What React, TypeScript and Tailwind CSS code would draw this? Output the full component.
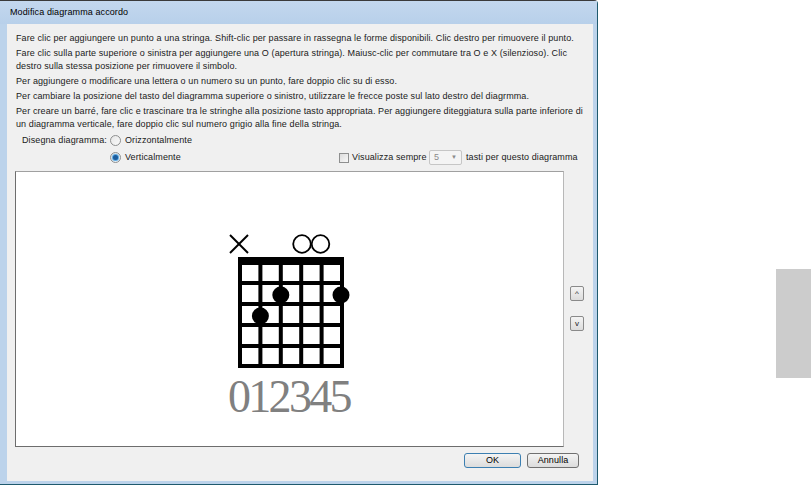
import React from "react";

const font = { fontFamily: '"Liberation Sans", Arial, sans-serif' };

function Radio({ checked }: { checked?: boolean }) {
  return (
    <span className="relative inline-flex h-[11px] w-[11px] items-center justify-center rounded-full border border-[#8e8f8f] bg-gradient-to-br from-[#e6e6e6] to-[#fafafa]">
      {checked && <span className="h-[5px] w-[5px] rounded-full bg-[#1c5c9c] shadow-[0_0_1px_1px_#4aa0e0]" />}
    </span>
  );
}

function Btn({ children, w, def }: { children: React.ReactNode; w: string; def?: boolean }) {
  return (
    <div
      className={`flex h-[15px] ${w} items-center justify-center rounded-[3px] border ${def ? "border-[#3c7fb1]" : "border-[#707070]"} bg-gradient-to-b from-[#f4f4f4] to-[#dcdcdc] text-[9px] text-black`}
    >
      {children}
    </div>
  );
}

function Chord() {
  const strings = [225, 245.4, 265.8, 286.2, 306.6, 327];
  const frets = [112, 133, 154, 175, 195];
  return (
    <svg width="548" height="274" viewBox="1 1 548 274">
      <line x1="215" y1="64" x2="233" y2="82" stroke="#000" strokeWidth="2" />
      <line x1="233" y1="64" x2="215" y2="82" stroke="#000" strokeWidth="2" />
      <circle cx="287" cy="73" r="8.8" fill="none" stroke="#000" strokeWidth="1.8" />
      <circle cx="305.5" cy="73" r="8.8" fill="none" stroke="#000" strokeWidth="1.8" />
      <rect x="223" y="86" width="106" height="8" fill="#000" />
      {strings.map((x) => (
        <rect key={x} x={x - 2} y="86" width="4" height="111" fill="#000" />
      ))}
      {frets.map((y) => (
        <rect key={y} x="223" y={y - 2} width="106" height="4" fill="#000" />
      ))}
      <circle cx="265.8" cy="124" r="8.5" fill="#000" />
      <circle cx="326" cy="124" r="8.5" fill="#000" />
      <circle cx="245.4" cy="145" r="8.5" fill="#000" />
      <text
        x="213"
        y="241"
        fill="#808080"
        fontSize="46"
        letterSpacing="-2.7"
        fontFamily='"Liberation Serif", "Times New Roman", serif'
      >
        012345
      </text>
    </svg>
  );
}

export default function App() {
  return (
    <div className="flex h-[485px] w-[811px] bg-white" style={font}>
      <div className="flex h-[485px] w-[598px] flex-col rounded-tr-[4px] border-t border-r border-b border-t-[#3a3a3a] border-r-[#1f5a6e] border-b-[#1f5a6e] bg-[#bcd3eb]">
        <div className="flex h-[23px] items-center bg-gradient-to-b from-[#c3d7ee] to-[#b8d0ea] pl-[10px] text-[9px] tracking-[0.1px] text-black">
          Modifica diagramma accordo
        </div>
        <div className="ml-[7px] mr-[4px] mb-[3px] flex flex-1 flex-col bg-[#f0f0f0] pt-[8px] text-[9px] leading-[13px] tracking-[0.1px] text-[#1a1a1a]">
          <div className="flex flex-col gap-[2px] whitespace-nowrap pl-[9px]">
            <p>Fare clic per aggiungere un punto a una stringa. Shift-clic per passare in rassegna le forme disponibili. Clic destro per rimuovere il punto.</p>
            <p>
              Fare clic sulla parte superiore o sinistra per aggiungere una O (apertura stringa). Maiusc-clic per commutare tra O e X (silenzioso). Clic
              <br />
              destro sulla stessa posizione per rimuovere il simbolo.
            </p>
            <p>Per aggiungere o modificare una lettera o un numero su un punto, fare doppio clic su di esso.</p>
            <p>Per cambiare la posizione del tasto del diagramma superiore o sinistro, utilizzare le frecce poste sul lato destro del diagrmma.</p>
            <p>
              Per creare un barré, fare clic e trascinare tra le stringhe alla posizione tasto appropriata. Per aggiungere diteggiatura sulla parte inferiore di
              <br />
              un diagramma verticale, fare doppio clic sul numero grigio alla fine della stringa.
            </p>
          </div>
          <div className="mt-[1px] flex h-[17px] items-center whitespace-nowrap">
            <span className="ml-[15px] w-[88px]">Disegna diagramma:</span>
            <Radio />
            <span className="ml-[4px]">Orizzontalmente</span>
          </div>
          <div className="flex h-[17px] items-center whitespace-nowrap">
            <span className="ml-[103px] flex">
              <Radio checked />
            </span>
            <span className="ml-[4px] w-[214px]">Verticalmente</span>
            <span className="h-[10px] w-[10px] border border-[#8e8f8f] bg-gradient-to-br from-[#dcdcdc] to-[#f8f8f8]" />
            <span className="ml-[3px] w-[77px]">Visualizza sempre</span>
            <span className="flex h-[15px] w-[33px] items-center justify-between rounded-[2px] border border-[#c6c6c6] bg-[#f4f4f4] px-[4px] text-[#8a8a8a]">
              <span>5</span>
              <span className="text-[6px]">▼</span>
            </span>
            <span className="ml-[4px]">tasti per questo diagramma</span>
          </div>
          <div className="mt-[5px] flex">
            <div className="ml-[8px] h-[276px] w-[549px] border border-t-[#a0a0a0] border-l-[#6d6d6d] border-b-[#6d6d6d] border-r-[#b8b8b8] bg-white">
              <Chord />
            </div>
            <div className="ml-[6px] flex flex-col pt-[115px]">
              <div className="flex h-[15px] w-[14px] items-center justify-center rounded-[2px] border border-[#8a8a8a] bg-gradient-to-b from-[#f4f4f4] to-[#dcdcdc] text-[8px] leading-none">
                ^
              </div>
              <div className="mt-[15px] flex h-[15px] w-[14px] items-center justify-center rounded-[2px] border border-[#8a8a8a] bg-gradient-to-b from-[#f4f4f4] to-[#dcdcdc] text-[8px] leading-none">
                v
              </div>
            </div>
          </div>
          <div className="mt-[6px] flex justify-end gap-[6px] pr-[14px]">
            <Btn w="w-[57px]" def>
              OK
            </Btn>
            <Btn w="w-[52px]">Annulla</Btn>
          </div>
        </div>
      </div>
      <div className="ml-[178px] mt-[269px] h-[109px] w-[35px] bg-[#cccccc]" />
    </div>
  );
}
